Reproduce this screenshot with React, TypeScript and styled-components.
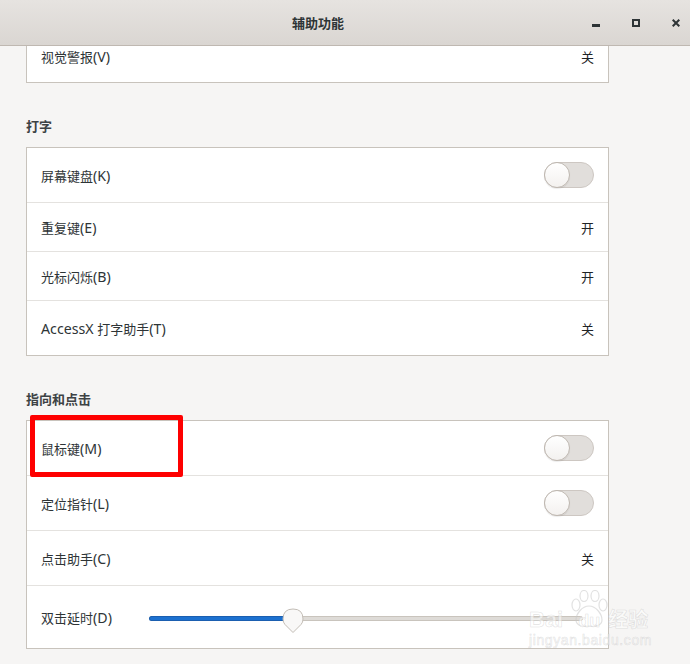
import styled, { createGlobalStyle } from 'styled-components';

const GlobalStyle = createGlobalStyle`
  html, body {
    margin: 0;
    padding: 0;
    background: #f6f5f4;
  }
`;

const S_Window = styled.div`
  position: relative;
  width: 690px;
  height: 664px;
  display: flex;
  flex-direction: column;
  overflow: hidden;
  background: #f6f5f4;
  color: #2e3436;
  font-family: 'Noto Sans', 'Noto Sans CJK SC', sans-serif;
  font-size: 13px;
`;

const S_TitleBar = styled.header`
  flex: none;
  position: relative;
  z-index: 1;
  height: 45px;
  padding-right: 54px;
  display: flex;
  align-items: center;
  justify-content: center;
  border-bottom: 1px solid #bfb8b1;
  background: linear-gradient(#e6e3e0, #dad6d2);
`;

const S_Title = styled.h1`
  margin: 0;
  font-size: 13px;
  font-weight: 700;
  color: #2e3436;
`;

const S_Controls = styled.div`
  position: absolute;
  top: 0;
  right: 0;
  height: 45px;
  display: flex;
  gap: 12px;
`;

const S_Control = styled.div`
  width: 28px;
  height: 45px;
  display: flex;
  align-items: center;
  justify-content: center;
`;

const S_Content = styled.main`
  flex: 1;
  min-height: 0;
  overflow: hidden;
  padding-left: 26px;
`;

const S_Scrolled = styled.div`
  width: 583px;
  margin-top: -13px;
`;

const S_SectionTitle = styled.h2`
  height: 21px;
  margin: 33px 0 10px;
  font-size: 13px;
  line-height: 21px;
  font-weight: 700;
  color: #3d4244;
`;

const S_Panel = styled.section`
  background: #fff;
  border: 1px solid #c8c3bc;
`;

const S_Row = styled.div<{ $height: number }>`
  box-sizing: border-box;
  height: ${(p) => p.$height}px;
  display: flex;
  align-items: center;
  padding: 0 14px;
  border-top: 1px solid #e4e2df;
  color: #2e3436;

  &:first-child {
    height: ${(p) => p.$height - 1}px;
    border-top: none;
  }
`;

const S_ClippedRow = styled(S_Row)`
  padding-bottom: 3px;
`;

const S_Label = styled.span`
  flex: none;
  width: 71px;
  white-space: nowrap;
`;

const S_Latin = styled.span`
  font-size: 14.2px;
`;

const S_Value = styled.span`
  margin-left: auto;
  color: #1f2426;
`;

const S_Switch = styled.div`
  margin-left: auto;
  width: 50px;
  height: 26px;
  box-sizing: border-box;
  border: 1px solid #cdc7c2;
  border-radius: 13px;
  background: #e1dedb;
  position: relative;
`;

const S_SwitchKnob = styled.div`
  position: absolute;
  top: -1px;
  left: -1px;
  width: 26px;
  height: 26px;
  box-sizing: border-box;
  border: 1px solid #bfb8b1;
  border-radius: 50%;
  background: linear-gradient(#fff, #f3f1ef);
  box-shadow: 0 1px 1px rgba(0, 0, 0, 0.08);
`;

const S_Slider = styled.div`
  flex: 1;
  position: relative;
  box-sizing: border-box;
  height: 5px;
  margin: 2px 11px 0 37px;
  border: 1px solid #c9c4bd;
  border-radius: 3px;
  background: #dedbd7;
`;

const S_SliderFill = styled.div`
  height: 100%;
  border-radius: 3px;
  background: #1c71d0;
  box-shadow: 0 0 0 1px #1b5fb0;
`;

const S_SliderThumb = styled.svg`
  position: absolute;
  top: -9px;
`;

const S_Highlight = styled.div`
  position: absolute;
  left: 30px;
  top: 415px;
  width: 153px;
  height: 62px;
  box-sizing: border-box;
  border: 5px solid #fe0000;
  border-radius: 2px;
`;

const S_Watermark = styled.div`
  position: absolute;
  left: 529px;
  top: 590px;
  width: 126px;
  height: 60px;
  color: rgba(255, 255, 255, 0.55);
  font-family: 'Liberation Sans', sans-serif;
  pointer-events: none;
  -webkit-text-stroke: 0.6px rgba(190, 190, 190, 0.45);
`;

const S_Brand = styled.div`
  position: absolute;
  left: 0;
  top: 16px;
  display: flex;
  align-items: baseline;
  white-space: nowrap;
  font-size: 22px;
  font-weight: 700;
  line-height: 26px;
`;

const S_BrandDu = styled.span`
  margin-left: 15px;
  font-size: 18px;
`;

const S_BrandCjk = styled.span`
  margin-left: 8px;
  font-family: 'Noto Sans CJK SC', sans-serif;
  font-size: 20px;
`;

const S_Paw = styled.svg`
  position: absolute;
  left: 41px;
  top: 0;
`;

const S_WatermarkUrl = styled.div`
  position: absolute;
  left: 0;
  top: 43px;
  white-space: nowrap;
  font-size: 14px;
  letter-spacing: 0.6px;
  line-height: 15px;
`;

const Switch = () => (
  <S_Switch>
    <S_SwitchKnob />
  </S_Switch>
);

const App = () => {
  return (
    <>
      <GlobalStyle />
      <S_Window>
        <S_TitleBar>
          <S_Title>辅助功能</S_Title>
          <S_Controls>
            <S_Control>
              <svg width="8" height="8" viewBox="0 0 8 8">
                <rect x="0" y="5" width="8" height="3" fill="#2e3436" />
              </svg>
            </S_Control>
            <S_Control>
              <svg width="8" height="8" viewBox="0 0 8 8">
                <rect x="1" y="1" width="6" height="6" fill="none" stroke="#2e3436" strokeWidth="2" />
              </svg>
            </S_Control>
            <S_Control>
              <svg width="8" height="8" viewBox="0 0 8 8">
                <path d="M0.7 0.7 L7.3 7.3 M7.3 0.7 L0.7 7.3" stroke="#2e3436" strokeWidth="2" fill="none" />
              </svg>
            </S_Control>
          </S_Controls>
        </S_TitleBar>
        <S_Content>
          <S_Scrolled>
            <S_Panel>
              <S_ClippedRow $height={49}>
                <S_Label>视觉警报<S_Latin>(V)</S_Latin></S_Label>
                <S_Value>关</S_Value>
              </S_ClippedRow>
            </S_Panel>

            <S_SectionTitle>打字</S_SectionTitle>
            <S_Panel>
              <S_Row $height={55}>
                <S_Label>屏幕键盘<S_Latin>(K)</S_Latin></S_Label>
                <Switch />
              </S_Row>
              <S_Row $height={49}>
                <S_Label>重复键<S_Latin>(E)</S_Latin></S_Label>
                <S_Value>开</S_Value>
              </S_Row>
              <S_Row $height={49}>
                <S_Label>光标闪烁<S_Latin>(B)</S_Latin></S_Label>
                <S_Value>开</S_Value>
              </S_Row>
              <S_Row $height={55}>
                <S_Label><S_Latin>AccessX </S_Latin>打字助手<S_Latin>(T)</S_Latin></S_Label>
                <S_Value>关</S_Value>
              </S_Row>
            </S_Panel>

            <S_SectionTitle>指向和点击</S_SectionTitle>
            <S_Panel>
              <S_Row $height={55}>
                <S_Label>鼠标键<S_Latin>(M)</S_Latin></S_Label>
                <Switch />
              </S_Row>
              <S_Row $height={55}>
                <S_Label>定位指针<S_Latin>(L)</S_Latin></S_Label>
                <Switch />
              </S_Row>
              <S_Row $height={55}>
                <S_Label>点击助手<S_Latin>(C)</S_Latin></S_Label>
                <S_Value>关</S_Value>
              </S_Row>
              <S_Row $height={63}>
                <S_Label>双击延时<S_Latin>(D)</S_Latin></S_Label>
                <S_Slider>
                  <S_SliderFill style={{ width: `${(144 / 434) * 100}%` }} />
                  <S_SliderThumb style={{ left: 132 }} width="22" height="26" viewBox="0 0 22 26">
                    <path
                      d="M11 24.5 L3 16.5 Q1 14.5 1 11 Q1 1 11 1 Q21 1 21 11 Q21 14.5 19 16.5 Z"
                      fill="#f9f8f7"
                      stroke="#c3bdb6"
                    />
                  </S_SliderThumb>
                </S_Slider>
              </S_Row>
            </S_Panel>
          </S_Scrolled>
        </S_Content>

        <S_Highlight />
        <S_Watermark>
          <S_Paw width="38" height="38" viewBox="0 0 38 38">
            <g fill="none" stroke="rgba(200,200,200,0.55)" strokeWidth="1.2">
              <ellipse cx="6" cy="15" rx="4" ry="6" />
              <ellipse cx="14" cy="6" rx="4" ry="5.5" />
              <ellipse cx="25" cy="6" rx="4" ry="5.5" />
              <ellipse cx="33" cy="15" rx="4" ry="6" />
              <path d="M19 16 C12 16 6 24 6 30 C6 36 14 37 19 36 C24 37 32 36 32 30 C32 24 26 16 19 16 Z" />
            </g>
          </S_Paw>
          <S_Brand>
            Bai<S_BrandDu>du</S_BrandDu>
            <S_BrandCjk>经验</S_BrandCjk>
          </S_Brand>
          <S_WatermarkUrl>jingyan.baidu.com</S_WatermarkUrl>
        </S_Watermark>
      </S_Window>
    </>
  );
};

export default App;
